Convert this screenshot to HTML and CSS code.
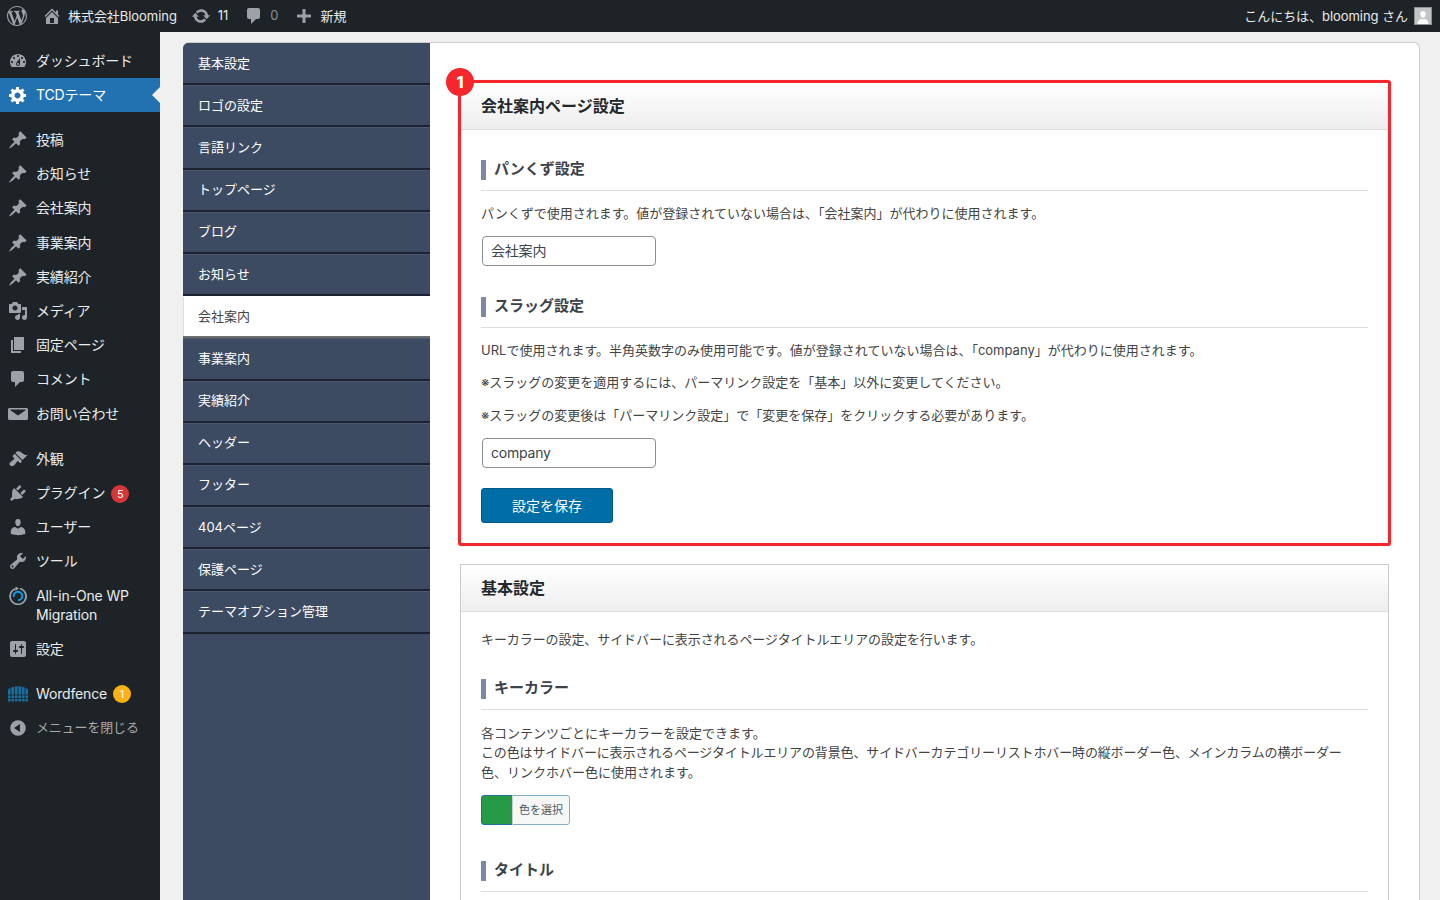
FILE: index.html
```html
<!DOCTYPE html>
<html lang="ja">
<head>
<meta charset="utf-8">
<title>会社案内ページ設定</title>
<link rel="stylesheet" href="styles.css">
</head>
<body>
<header class="adminbar">
  <svg class="ab-logo" viewBox="0 0 20 20"><path fill-rule="evenodd" d="M20 10c0-5.510-4.490-10-10-10C4.480 0 0 4.490 0 10c0 5.520 4.480 10 10 10 5.510 0 10-4.480 10-10zM7.780 15.370L4.370 6.220c.550-.020 1.170-.080 1.170-.080.500-.060.440-1.130-.060-1.110 0 0-1.450.110-2.370.110-.180 0-.370 0-.580-.010C4.120 2.690 6.870 1.110 10 1.110c2.330 0 4.450.870 6.050 2.340-.680-.110-1.650.390-1.650 1.580 0 .740.450 1.360.900 2.100.350.610.550 1.360.550 2.460 0 1.490-1.400 5-1.400 5l-3.030-8.370c.540-.020.820-.170.820-.170.500-.050.440-1.250-.060-1.220 0 0-1.440.120-2.380.120-.870 0-2.330-.120-2.330-.120-.500-.030-.560 1.200-.060 1.220l.920.080 1.260 3.410zM17.410 10c.240-.640.740-1.870.430-4.250.700 1.290 1.050 2.710 1.050 4.250 0 3.290-1.730 6.240-4.400 7.780.970-2.590 1.940-5.200 2.920-7.780zM6.100 18.090C3.120 16.650 1.110 13.530 1.110 10c0-1.300.230-2.480.720-3.590C3.250 10.300 4.670 14.200 6.100 18.090zm4.030-6.630l2.580 6.980c-.860.290-1.760.450-2.710.450-.790 0-1.570-.110-2.290-.330.810-2.380 1.620-4.740 2.420-7.100z"/></svg>
  <div class="ab-item ab-site">
    <svg class="ab-icon" viewBox="0 0 20 20"><path fill-rule="evenodd" d="M16 8.500l1.530 1.530-1.060 1.060L10 4.620l-6.470 6.470-1.060-1.060L10 2.500l4 4v-2h2v4zm-6-2.460l6 5.990V18H4v-5.970zM12 17v-5H8v5h4z"/></svg>
    <span class="ab-text">株式会社Blooming</span>
  </div>
  <div class="ab-item ab-updates">
    <svg class="ab-icon" viewBox="0 0 20 20"><path d="M10.200 3.280c3.530 0 6.430 2.610 6.900 6h2.080l-3.500 4-3.500-4h2.320c-.450-1.970-2.210-3.440-4.300-3.440-1.450 0-2.730.710-3.540 1.800L4.950 5.850C6.230 4.220 8.220 3.280 10.200 3.280zm-.400 13.440c-3.520 0-6.430-2.610-6.900-6H.820l3.500-4c1.170 1.330 2.330 2.670 3.500 4H5.500c.450 1.970 2.210 3.440 4.300 3.440 1.450 0 2.730-.710 3.540-1.800l1.710 1.790c-1.280 1.630-3.270 2.570-5.250 2.570z"/></svg>
    <span class="ab-text">11</span>
  </div>
  <div class="ab-item ab-comments">
    <svg class="ab-icon" viewBox="0 0 20 20"><path d="M5 2h9c1.100 0 2 .9 2 2v7c0 1.100-.9 2-2 2h-2l-5 5v-5H5c-1.100 0-2-.9-2-2V4c0-1.100.9-2 2-2z"/></svg>
    <span class="ab-text ab-dim">0</span>
  </div>
  <div class="ab-item ab-new">
    <svg class="ab-icon" viewBox="0 0 20 20"><path d="M17 8.500v3h-5.500V17h-3v-5.500H3v-3h5.500V3h3v5.500z"/></svg>
    <span class="ab-text">新規</span>
  </div>
  <div class="ab-account">
    <span class="ab-text">こんにちは、blooming さん</span>
    <span class="avatar"><svg viewBox="0 0 16 16"><path fill="#fff" d="M8 3c1.700 0 2.700 1.300 2.700 3S9.700 9.800 8 9.800 5.300 7.700 5.300 6 6.300 3 8 3zM2.500 16c0-3 2-4.800 3.800-5.300L8 11.600l1.700-.9c1.800.5 3.800 2.300 3.800 5.300z"/></svg></span>
  </div>
</header>

<div class="wrap">
  <nav class="sidebar">
    <ul class="menu">
      <li class="mi"><svg class="mi-icon" viewBox="0 0 20 20"><path fill-rule="evenodd" d="M3.760 16h12.480c1.100-1.370 1.760-3.110 1.760-5 0-4.420-3.580-8-8-8s-8 3.580-8 8c0 1.890.66 3.630 1.760 5zM10 4c.55 0 1 .45 1 1s-.45 1-1 1-1-.45-1-1 .45-1 1-1zM6 6c.55 0 1 .45 1 1s-.45 1-1 1-1-.45-1-1 .45-1 1-1zm8 0c.55 0 1 .45 1 1s-.45 1-1 1-1-.45-1-1 .45-1 1-1zm-5.370 5.550L12 7v6c0 1.100-.9 2-2 2s-2-.9-2-2c0-.57.24-1.080.63-1.450zM4 10c.55 0 1 .45 1 1s-.45 1-1 1-1-.45-1-1 .45-1 1-1zm12 0c.55 0 1 .45 1 1s-.45 1-1 1-1-.45-1-1 .45-1 1-1zm-5 3c0-.55-.45-1-1-1s-1 .45-1 1 .45 1 1 1 1-.45 1-1z"/></svg><span class="mi-text">ダッシュボード</span></li>
      <li class="mi mi-active"><svg class="mi-icon" viewBox="0 0 20 20"><path fill-rule="evenodd" d="M18 12h-2.180c-.17.7-.44 1.350-.81 1.930l1.540 1.540-2.100 2.100-1.540-1.540c-.58.36-1.230.63-1.910.79V19H8v-2.180c-.68-.16-1.330-.43-1.910-.79l-1.540 1.540-2.120-2.120 1.540-1.540c-.36-.58-.63-1.230-.79-1.910H1V9.030h2.170c.16-.7.44-1.350.8-1.940L2.430 5.550l2.100-2.100 1.540 1.540c.58-.37 1.240-.64 1.930-.81V2h3v2.180c.68.16 1.330.43 1.910.79l1.540-1.540 2.120 2.120-1.540 1.540c.36.59.64 1.240.8 1.940H18V12zm-8.500 1.500c1.660 0 3-1.340 3-3s-1.340-3-3-3-3 1.340-3 3 1.340 3 3 3z"/></svg><span class="mi-text">TCDテーマ</span></li>
      <li class="mi mi-sep"><svg class="mi-icon" viewBox="0 0 20 20"><use href="#pin"/></svg><span class="mi-text">投稿</span></li>
      <li class="mi"><svg class="mi-icon" viewBox="0 0 20 20"><use href="#pin"/></svg><span class="mi-text">お知らせ</span></li>
      <li class="mi"><svg class="mi-icon" viewBox="0 0 20 20"><use href="#pin"/></svg><span class="mi-text">会社案内</span></li>
      <li class="mi"><svg class="mi-icon" viewBox="0 0 20 20"><use href="#pin"/></svg><span class="mi-text">事業案内</span></li>
      <li class="mi"><svg class="mi-icon" viewBox="0 0 20 20"><use href="#pin"/></svg><span class="mi-text">実績紹介</span></li>
      <li class="mi"><svg class="mi-icon" viewBox="0 0 20 20"><path fill-rule="evenodd" d="M13 11V4c0-.55-.45-1-1-1h-1.670L9 1H5L3.670 3H2c-.55 0-1 .45-1 1v7c0 .55.45 1 1 1h10c.55 0 1-.45 1-1zM7 4.500c1.380 0 2.500 1.120 2.500 2.500S8.380 9.500 7 9.500 4.500 8.380 4.500 7 5.620 4.500 7 4.500zM14 6h5v10.500c0 1.380-1.120 2.500-2.500 2.500S14 17.880 14 16.500s1.120-2.500 2.500-2.500c.17 0 .34.02.5.05V9h-3V6zm-4 8.050V13h2v3.500c0 1.380-1.120 2.500-2.500 2.500S7 17.880 7 16.500 8.120 14 9.500 14c.17 0 .34.02.5.05z"/></svg><span class="mi-text">メディア</span></li>
      <li class="mi"><svg class="mi-icon" viewBox="0 0 20 20"><path d="M6 15V2h10v13H6zm-1 1h8v2H3V5h2v11z"/></svg><span class="mi-text">固定ページ</span></li>
      <li class="mi"><svg class="mi-icon" viewBox="0 0 20 20"><path d="M5 2h9c1.100 0 2 .9 2 2v7c0 1.100-.9 2-2 2h-2l-5 5v-5H5c-1.100 0-2-.9-2-2V4c0-1.100.9-2 2-2z"/></svg><span class="mi-text">コメント</span></li>
      <li class="mi"><svg class="mi-icon" viewBox="0 0 20 20"><path d="M1.500 4h17c.83 0 1.500.67 1.500 1.500v9c0 .83-.67 1.500-1.500 1.500h-17C.67 16 0 15.330 0 14.500v-9C0 4.670.67 4 1.500 4zm.9 2.300L10 11.600l7.600-5.300v-.9H2.400z" fill-rule="evenodd"/></svg><span class="mi-text">お問い合わせ</span></li>
      <li class="mi mi-sep"><svg class="mi-icon" viewBox="0 0 20 20"><path d="M14.480 11.060L7.410 3.990l1.500-1.500c.5-.56 2.300-.47 3.510.32 1.210.8 1.430 1.280 2.910 2.100 1.180.64 2.450 1.260 4.450.85zm-.71.71L6.700 4.700 4.930 6.470c-.39.39-.39 1.020 0 1.410l1.060 1.060c.39.39.39 1.030 0 1.420-.6.6-1.430 1.110-2.210 1.690-.35.26-.7.53-1.010.84C1.430 13.230.91 15.120 2.200 16.400c1.280 1.290 3.170.76 4.510-.57.31-.31.58-.66.84-1.010.58-.78 1.090-1.610 1.690-2.210.39-.39 1.020-.39 1.410 0l1.060 1.060c.39.39 1.020.39 1.410 0z"/></svg><span class="mi-text">外観</span></li>
      <li class="mi"><svg class="mi-icon" viewBox="0 0 20 20"><path d="M13.110 4.360L9.870 7.600 8 5.730l3.240-3.240c.35-.34 1.050-.2 1.560.32.52.51.66 1.210.31 1.550zm-8 1.770l.91-1.120 9.010 9.010-1.190.84c-.71.71-2.630 1.160-3.820 1.160H6.140L4.900 17.260c-.59.59-1.540.59-2.120 0-.59-.58-.59-1.530 0-2.120l1.240-1.240v-3.880c0-1.130.4-3.190 1.090-3.890zm7.260 3.970l3.240-3.240c.34-.35 1.040-.21 1.550.31.52.51.66 1.210.31 1.550l-3.240 3.250z"/></svg><span class="mi-text">プラグイン</span><b class="count count-red">5</b></li>
      <li class="mi"><svg class="mi-icon" viewBox="0 0 20 20"><path d="M10 9.250c-2.270 0-2.730-3.440-2.730-3.440C7 4.020 7.820 2 9.970 2c2.160 0 2.980 2.020 2.710 3.810 0 0-.41 3.440-2.680 3.440zm0 2.570L12.720 10c2.390 0 4.520 2.330 4.520 4.530v2.490s-3.650 1.130-7.240 1.130c-3.650 0-7.240-1.130-7.240-1.130v-2.490c0-2.250 1.940-4.480 4.470-4.480z"/></svg><span class="mi-text">ユーザー</span></li>
      <li class="mi"><svg class="mi-icon" viewBox="0 0 20 20"><path fill-rule="evenodd" d="M16.680 9.770c-1.340 1.340-3.300 1.670-4.950.99l-5.410 6.520c-.99.99-2.590.99-3.580 0s-.99-2.590 0-3.570l6.520-5.420c-.68-1.650-.35-3.610.99-4.950 1.280-1.280 3.120-1.620 4.720-1.060l-2.890 2.890 2.820 2.820 2.860-2.870c.53 1.580.18 3.390-1.080 4.650zM3.810 16.210c.4.39 1.040.39 1.430 0 .4-.4.4-1.040 0-1.430-.39-.4-1.030-.4-1.430 0-.39.39-.39 1.030 0 1.430z"/></svg><span class="mi-text">ツール</span></li>
      <li class="mi mi-two"><svg class="mi-icon" viewBox="0 0 20 20"><path fill="none" stroke="#9ca2a7" stroke-width="1.700" d="M7.500 2.700A8 8 0 1 0 12 2.500"/><path fill="#9ca2a7" d="M7.500 0.500l3.500 2-3.500 2.200z"/><path fill="none" stroke="#0f9be3" stroke-width="2" d="M5.800 11A4.300 4.300 0 1 1 10 14.300"/></svg><span class="mi-text">All-in-One WP<br>Migration</span></li>
      <li class="mi"><svg class="mi-icon" viewBox="0 0 20 20"><path fill-rule="evenodd" d="M18 16V4c0-1.100-.9-2-2-2H4c-1.100 0-2 .9-2 2v12c0 1.100.9 2 2 2h12c1.100 0 2-.9 2-2zM8 11h1c.55 0 1 .45 1 1s-.45 1-1 1H8v1.500c0 .28-.22.5-.5.5s-.5-.22-.5-.5V13H6c-.55 0-1-.45-1-1s.45-1 1-1h1V5.500c0-.28.22-.5.5-.5s.5.22.5.5V11zm5-2h-1c-.55 0-1-.45-1-1s.45-1 1-1h1V5.500c0-.28.22-.5.5-.5s.5.22.5.5V7h1c.55 0 1 .45 1 1s-.45 1-1 1h-1v5.500c0 .28-.22.5-.5.5s-.5-.22-.5-.5V9z"/></svg><span class="mi-text">設定</span></li>
      <li class="mi mi-sep"><svg class="mi-icon" viewBox="0 0 20 20"><path fill="#1a6ea0" d="M0 5.500L3 3.500l3.500-1L10 2l3.500.5 3.500 1 3 2V17.500H0z"/><path stroke="#1d2327" stroke-width=".8" d="M3 3v15M6.500 2v16M10 2v16M13.500 2v16M17 3v15M0 11h20M0 14.500h20"/></svg><span class="mi-text">Wordfence</span><b class="count count-amber">1</b></li>
      <li class="mi mi-close"><svg class="mi-icon" viewBox="0 0 20 20"><path fill-rule="evenodd" d="M10 2.200a7.800 7.800 0 1 1 0 15.600 7.800 7.800 0 0 1 0-15.600zM12 6l-6 4 6 4z"/></svg><span class="mi-text">メニューを閉じる</span></li>
    </ul>
    <svg class="defs" width="0" height="0"><defs><path id="pin" d="M10.440 3.020l1.820-1.820 6.360 6.350-1.830 1.820c-1.050-.68-2.480-.57-3.410.36l-.75.75c-.92.93-1.040 2.350-.35 3.410l-1.830 1.820-2.410-2.410-2.800 2.790c-.42.42-3.380 2.710-3.800 2.290s1.860-3.390 2.280-3.810l2.790-2.790L4.100 9.360l1.830-1.820c1.050.69 2.480.57 3.400-.36l.75-.75c.93-.92 1.050-2.350.36-3.410z"/></defs></svg>
  </nav>

  <main class="main">
    <div class="panel">
      <ul class="tabs">
        <li class="tab">基本設定</li>
        <li class="tab">ロゴの設定</li>
        <li class="tab">言語リンク</li>
        <li class="tab">トップページ</li>
        <li class="tab">ブログ</li>
        <li class="tab">お知らせ</li>
        <li class="tab tab-active">会社案内</li>
        <li class="tab">事業案内</li>
        <li class="tab">実績紹介</li>
        <li class="tab">ヘッダー</li>
        <li class="tab">フッター</li>
        <li class="tab">404ページ</li>
        <li class="tab">保護ページ</li>
        <li class="tab">テーマオプション管理</li>
      </ul>
      <div class="content">
        <section class="card card-marked">
          <h3 class="card-title">会社案内ページ設定</h3>
          <div class="card-body">
            <h4 class="sub"><span>パンくず設定</span></h4>
            <p class="desc">パンくずで使用されます。値が登録されていない場合は、「会社案内」が代わりに使用されます。</p>
            <div class="field">会社案内</div>
            <h4 class="sub sub-next"><span>スラッグ設定</span></h4>
            <p class="desc">URLで使用されます。半角英数字のみ使用可能です。値が登録されていない場合は、「company」が代わりに使用されます。</p>
            <p class="desc desc-more">※スラッグの変更を適用するには、パーマリンク設定を「基本」以外に変更してください。</p>
            <p class="desc desc-more">※スラッグの変更後は「パーマリンク設定」で「変更を保存」をクリックする必要があります。</p>
            <div class="field field-last">company</div>
            <div class="save">設定を保存</div>
          </div>
          <div class="mark"></div>
          <div class="mark-badge">1</div>
        </section>
        <section class="card card-second">
          <h3 class="card-title">基本設定</h3>
          <div class="card-body card-body-second">
            <p class="desc intro">キーカラーの設定、サイドバーに表示されるページタイトルエリアの設定を行います。</p>
            <h4 class="sub"><span>キーカラー</span></h4>
            <p class="desc desc-key">各コンテンツごとにキーカラーを設定できます。<br><span class="tight">この色はサイドバーに表示されるページタイトルエリアの背景色、サイドバーカテゴリーリストホバー時の縦ボーダー色、メインカラムの横ボーダー</span><br>色、リンクホバー色に使用されます。</p>
            <div class="picker"><span class="swatch"></span><span class="picker-label">色を選択</span></div>
            <h4 class="sub sub-title"><span>タイトル</span></h4>
          </div>
        </section>
      </div>
    </div>
  </main>
</div>
</body>
</html>
```
FILE: styles.css
```css
* { box-sizing: border-box; }
html, body { margin: 0; height: 100%; overflow: hidden; }
body {
  font-family: Inter, "Noto Sans CJK JP", sans-serif;
  font-size: 13px;
  color: #3c434a;
  background: #f0f0f0;
  display: flex;
  flex-direction: column;
}
ul { list-style: none; margin: 0; padding: 0; }
h3, h4, p { margin: 0; }

/* admin bar */
.adminbar {
  height: 32px;
  flex: none;
  background: #1d2327;
  color: #e8eaeb;
  display: flex;
  align-items: center;
  padding-left: 7px;
  font-size: 13px;
}
.ab-logo { width: 20px; height: 20px; fill: #9ca2a7; }
.ab-item { display: flex; align-items: center; }
.ab-icon { width: 20px; height: 20px; fill: #9ca2a7; flex: none; }
.ab-text { padding-bottom: 2px; letter-spacing: -.05px; }
.ab-site { margin-left: 15px; gap: 6px; }
.ab-updates { margin-left: 14px; gap: 7px; }
.ab-comments { margin-left: 16px; gap: 6px; }
.ab-new { margin-left: 16px; gap: 6px; }
.ab-dim { color: #8c8f94; }
.ab-account { margin-left: auto; display: flex; align-items: center; gap: 6px; padding-right: 8px; }
.avatar { width: 18px; height: 18px; background: #c4c4c4; border: 1px solid #8f8f8f; display: block; }
.avatar svg { width: 16px; height: 16px; display: block; }

/* layout */
.wrap { flex: 1; min-height: 0; display: flex; }
.sidebar { width: 160px; flex: none; background: #1d2327; padding-top: 11.6px; }
.defs { position: absolute; }
.menu { color: #eaeced; font-size: 14px; letter-spacing: -.15px; }
.mi { height: 34.2px; display: flex; align-items: center; padding-left: 8px; position: relative; line-height: 19px; }
.mi-icon { width: 20px; height: 20px; fill: #9ca2a7; flex: none; margin-right: 8px; }
.mi-text { padding-bottom: 1px; }
.mi-sep { margin-top: 11px; }
.mi-two { height: 53.2px; align-items: flex-start; padding-top: 7.5px; }
.mi-active { background: #2271b1; color: #fff; }
.mi-active .mi-icon { fill: #fff; }
.mi-active::after {
  content: "";
  position: absolute;
  right: 0;
  top: 50%;
  margin-top: -8px;
  border: 8px solid transparent;
  border-right-color: #f0f0f0;
  border-left-width: 0;
}
.mi-close { color: #a7aaad; font-size: 13px; }
.count {
  width: 18px;
  height: 18px;
  border-radius: 50%;
  margin-left: 6px;
  color: #fff;
  font-size: 11px;
  font-weight: 400;
  line-height: 18px;
  text-align: center;
  letter-spacing: 0;
}
.count-red { background: #d63638; margin-top: 2px; }
.count-amber { background: #fcb214; }

/* panel */
.main { flex: 1; min-width: 0; padding: 10px 20px 0 23px; }
.panel {
  height: 100%;
  background: #fff;
  border: 1px solid #ccc;
  border-left: 0;
  border-bottom: 0;
  border-radius: 6px 6px 0 0;
  display: flex;
  overflow: hidden;
}
.tabs { width: 247px; flex: none; background: #3c4a62; }
.tab {
  height: 42.2px;
  display: flex;
  align-items: center;
  padding: 0 0 3px 15px;
  color: #fff;
  font-size: 13px;
  border-top: 1px solid #4b586f;
  border-bottom: 2px solid #1c2230;
}
.tab:first-child { border-top-color: #3c4a62; }
.tab-active {
  background: #fff;
  color: #444;
  border-top-color: #fff;
  border-bottom-color: #6d6d6d;
  box-shadow: inset 1px 0 #ddd;
}

/* content */
.content { flex: 1; min-width: 0; padding: 39px 30px 0 30px; }
.card { background: #fff; border: 1px solid #ccc; position: relative; }
.card-second { margin-top: 20px; }
.card-title {
  height: 47px;
  padding-left: 20px;
  font-size: 16px;
  font-weight: 700;
  line-height: 46px;
  color: #23282d;
  background: linear-gradient(#fff, #eee);
  border-bottom: 1px solid #ddd;
}
.card-body { padding: 30px 20px 20px; }
.card-body-second { padding-top: 18px; padding-bottom: 100px; }
.sub {
  font-size: 15px;
  font-weight: 700;
  color: #3c434a;
  padding-bottom: 10px;
  border-bottom: 1px solid #ddd;
}
.sub span {
  display: block;
  height: 20px;
  border-left: 5px solid #7d88a3;
  padding-left: 8px;
  line-height: 18px;
}
.sub-next { margin-top: 31px; }
.sub-title { margin-top: 36px; }
.desc {
  font-size: 13px;
  line-height: 19.5px;
  margin-top: 13px;
  color: #444;
}
.desc-more { margin-top: 13px; }
.desc-key { margin-top: 14px; }
.tight { letter-spacing: -.14px; }
.intro { margin-top: 0; margin-bottom: 29px; letter-spacing: -.08px; }
.field {
  width: 174px;
  height: 30px;
  margin: 12px 0 0 1px;
  padding-left: 8px;
  border: 1px solid #8c8f94;
  border-radius: 4px;
  font-size: 14px;
  line-height: 28px;
  color: #3c434a;
  letter-spacing: -.2px;
}
.field-last { margin-top: 13px; }
.save {
  width: 132px;
  height: 35px;
  margin-top: 20px;
  background: #006ea6;
  border: 1px solid #005a87;
  border-radius: 3px;
  color: #fff;
  font-size: 14px;
  line-height: 34px;
  text-align: center;
}
.picker {
  width: 89px;
  height: 30px;
  margin-top: 13px;
  display: flex;
  border-radius: 3px;
  overflow: hidden;
  background: #f6f7f7;
}
.swatch { width: 31px; background: #279a46; border: 1px solid #1f6f9f; border-right: 0; border-radius: 3px 0 0 3px; }
.picker-label {
  flex: 1;
  padding-left: 6px;
  font-size: 11px;
  line-height: 28px;
  color: #50575e;
  border: 1px solid #7fb1cc;
  border-left-color: #c8ccd0;
  border-radius: 0 3px 3px 0;
}

/* annotation over the first card */
.mark {
  position: absolute;
  inset: -3px;
  border: 3px solid #f5262c;
  border-radius: 3px;
  box-shadow: 0 0 1px 0 rgba(245, 38, 44, .6);
  pointer-events: none;
}
.mark-badge {
  position: absolute;
  left: -15px;
  top: -15px;
  width: 28px;
  height: 28px;
  border-radius: 50%;
  background: #f5262c;
  color: #fff;
  font-size: 16px;
  font-weight: 800;
  line-height: 28px;
  text-align: center;
}
```
